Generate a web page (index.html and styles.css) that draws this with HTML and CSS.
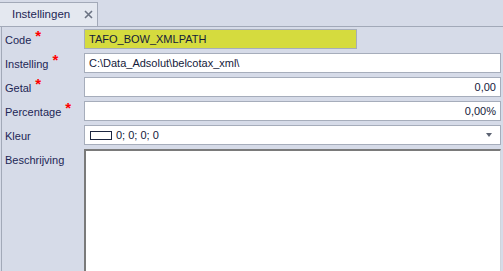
FILE: index.html
```html
<!DOCTYPE html>
<html lang="nl">
<head>
    <meta charset="UTF-8">
    <title>Instellingen</title>
    <link rel="stylesheet" href="styles.css">
</head>
<body>
    <div class="tabs">
        <div class="tab">
            <span class="tab-title">Instellingen</span>
            <svg class="tab-close" width="9" height="9" viewBox="0 0 9 9">
                <path d="M1 1 L8 8 M8 1 L1 8" stroke="#6b7383" stroke-width="1.6"/>
            </svg>
        </div>
    </div>

    <div class="panel">
        <div class="form">
            <label class="lbl">Code <span class="req">*</span></label>
            <div class="field field-code">TAFO_BOW_XMLPATH</div>

            <label class="lbl">Instelling <span class="req">*</span></label>
            <div class="field">C:\Data_Adsolut\belcotax_xml\</div>

            <label class="lbl">Getal <span class="req">*</span></label>
            <div class="field num">0,00</div>

            <label class="lbl">Percentage <span class="req">*</span></label>
            <div class="field num">0,00%</div>

            <label class="lbl">Kleur</label>
            <div class="field combo">
                <span class="swatch"></span>
                <span>0; 0; 0; 0</span>
                <span class="arrow"></span>
            </div>

            <label class="lbl lbl-top">Beschrijving</label>
            <div class="memo"></div>
        </div>
    </div>
</body>
</html>
```

FILE: styles.css
```css
html, body {
    height: 100%;
}
body {
    margin: 0;
    background-color: #d6dbe8;
    font-family: 'Liberation Sans', Arial, sans-serif;
    font-size: 11px;
    color: #1d2655;
    overflow: hidden;
    display: flex;
    flex-direction: column;
}
.tabs {
    height: 24px;
    padding-top: 2px;
    border-bottom: 1px solid #a2a9b8;
    display: flex;
}
.tab {
    width: 98px;
    height: 24px;
    box-sizing: border-box;
    border: 1px solid #a2a9b8;
    border-bottom: none;
    border-left: none;
    background-color: #e4e8f0;
    margin-bottom: -1px;
    padding-bottom: 1px;
    display: flex;
    align-items: center;
    padding-left: 12px;
    gap: 14px;
}
.tab-title {
    color: #1d2655;
    font-size: 11.5px;
}
.panel {
    flex: 1;
    border-left: 1px solid #a2a9b8;
    margin-left: 1px;
    padding: 2px 2px 0 2px;
    display: flex;
}
.form {
    flex: 1;
    display: grid;
    grid-template-columns: 80px 1fr;
    grid-template-rows: 20px 20px 20px 20px 20px 1fr;
    row-gap: 4px;
}
.lbl {
    display: flex;
    align-items: center;
    padding-left: 1px;
    padding-top: 1px;
    white-space: nowrap;
}
.lbl-top {
    align-items: flex-start;
    padding-top: 5px;
}
.req {
    color: #f00;
    font-weight: bold;
    font-size: 15px;
    line-height: 10px;
    align-self: flex-start;
    margin-top: 1px;
    margin-left: 4px;
}
.field {
    box-sizing: border-box;
    height: 20px;
    background-color: #fff;
    border: 1px solid #a6adbb;
    padding: 0 4px;
    display: flex;
    align-items: center;
    color: #141a3a;
    white-space: nowrap;
}
.field-code {
    width: 273px;
    background-color: #d5db3e;
}
.num {
    justify-content: flex-end;
}
.combo {
    gap: 4px;
    padding-left: 5px;
}
.swatch {
    width: 20px;
    height: 7px;
    border: 1px solid #1b2540;
    background-color: #fff;
}
.arrow {
    margin-left: auto;
    margin-right: 4px;
    width: 0;
    height: 0;
    border-left: 3.5px solid transparent;
    border-right: 3.5px solid transparent;
    border-top: 4px solid #5c6372;
}
.memo {
    box-sizing: border-box;
    background-color: #fff;
    border-top: 2px solid #7a7a7a;
    border-left: 2px solid #7a7a7a;
    border-right: 1px solid #d0d4dc;
    border-bottom: none;
}
```
